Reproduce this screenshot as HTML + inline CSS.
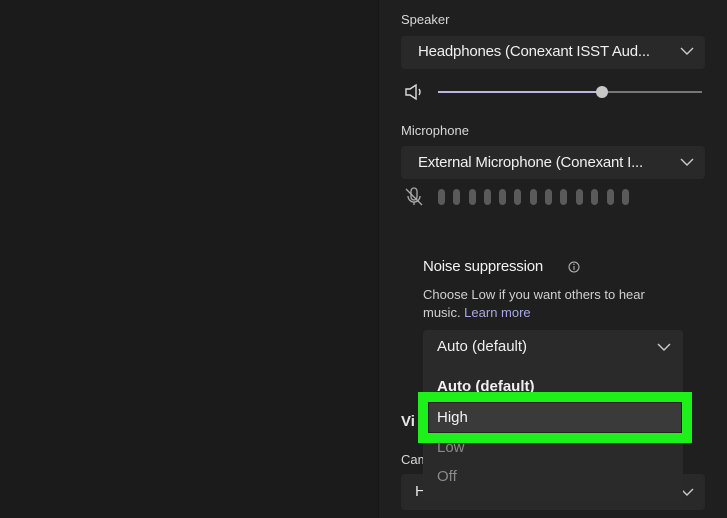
<!DOCTYPE html>
<html><head><style>
body{margin:0;width:727px;height:518px;background:#1b1b1b;position:relative;overflow:hidden;font-family:"Liberation Sans",sans-serif;color:#e6e6e6}
.a{position:absolute}
.panel{left:378px;top:0;width:349px;height:518px;background:#1f1f1f;border-left:1px solid #161616}
.dd{background:#292929;border-radius:4px}
.lbl{font-size:13px;color:#d8d8d8}
.bar{position:absolute;top:189px;width:7px;height:16px;border-radius:4px;background:#5a5a5a}
</style></head><body>
<div class="a panel"></div>
<div class="a lbl" style="left:401px;top:12px">Speaker</div>
<div class="a dd" style="left:401px;top:36px;width:304px;height:33px"></div>
<div class="a" style="left:418px;top:43px;font-size:15px;color:#f0f0f0;letter-spacing:-0.2px">Headphones (Conexant ISST Aud...</div>
<svg class="a" style="left:680px;top:46px" width="14" height="10"><path d="M1 2l6 6 6-6" stroke="#ccc" fill="none" stroke-width="1.4"/></svg>
<svg class="a" style="left:404px;top:83px" width="22" height="18"><path d="M2 6h4l6-4v14l-6-4H2z" stroke="#ddd" fill="none" stroke-width="1.4"/><path d="M15 6q2 3 0 6" stroke="#ddd" fill="none" stroke-width="1.4"/></svg>
<div class="a" style="left:438px;top:91px;width:164px;height:2px;background:#b8b8e0"></div>
<div class="a" style="left:602px;top:91px;width:100px;height:2px;background:#777"></div>
<div class="a" style="left:596px;top:86px;width:12px;height:12px;border-radius:6px;background:#c8c8c8"></div>
<div class="a lbl" style="left:401px;top:123px">Microphone</div>
<div class="a dd" style="left:401px;top:146px;width:304px;height:33px"></div>
<div class="a" style="left:418px;top:154px;font-size:15px;color:#f0f0f0;letter-spacing:-0.2px">External Microphone (Conexant I...</div>
<svg class="a" style="left:680px;top:157px" width="14" height="10"><path d="M1 2l6 6 6-6" stroke="#ccc" fill="none" stroke-width="1.4"/></svg>
<svg class="a" style="left:404px;top:187px" width="20" height="20"><path d="M7 4a3 3 0 016 0v6a3 3 0 01-6 0z M4 9a6 6 0 0012 0 M10 15v3 M2 2l16 16" stroke="#aaa" fill="none" stroke-width="1.3"/></svg>
<div class="bar" style="left:438px"></div><div class="bar" style="left:453px"></div><div class="bar" style="left:469px"></div><div class="bar" style="left:484px"></div><div class="bar" style="left:499px"></div><div class="bar" style="left:514px"></div><div class="bar" style="left:530px"></div><div class="bar" style="left:545px"></div><div class="bar" style="left:560px"></div><div class="bar" style="left:576px"></div><div class="bar" style="left:591px"></div><div class="bar" style="left:607px"></div><div class="bar" style="left:622px"></div>
<div class="a" style="left:423px;top:258px;font-size:15px;color:#f2f2f2;letter-spacing:-0.2px">Noise suppression</div>
<svg class="a" style="left:568px;top:261px" width="12" height="12"><circle cx="6" cy="6" r="5" stroke="#bbb" fill="none"/><path d="M6 5v4" stroke="#bbb"/><circle cx="6" cy="3.3" r="0.7" fill="#bbb"/></svg>
<div class="a" style="left:423px;top:286px;font-size:13px;line-height:18px;color:#d0d0d0">Choose Low if you want others to hear<br>music. <span style="color:#a8a8e8">Learn more</span></div>
<div class="a" style="left:401px;top:413px;font-size:15px;font-weight:bold">Vi</div>
<div class="a lbl" style="left:401px;top:452px">Cam</div>
<div class="a dd" style="left:401px;top:474px;width:304px;height:36px"></div>
<div class="a" style="left:415px;top:483px;font-size:15px">H</div>
<svg class="a" style="left:680px;top:487px" width="14" height="10"><path d="M1 2l6 6 6-6" stroke="#ccc" fill="none" stroke-width="1.4"/></svg>
<div class="a" style="left:423px;top:330px;width:260px;height:172px;background:#2a2a2a;border-radius:4px"></div>
<div class="a" style="left:437px;top:338px;font-size:15px;color:#f0f0f0">Auto (default)</div>
<svg class="a" style="left:657px;top:342px" width="14" height="10"><path d="M1 2l6 6 6-6" stroke="#ccc" fill="none" stroke-width="1.4"/></svg>
<div class="a" style="left:437px;top:378px;font-size:15px;font-weight:bold;color:#f0f0f0">Auto (default)</div>
<div class="a" style="left:418px;top:392px;width:254px;height:31px;border:10px solid #1ef01a;background:#3a3a3a;box-shadow:inset 0 0 0 1px #222"></div>
<div class="a" style="left:437px;top:409px;font-size:15px;color:#f5f5f5">High</div>
<div class="a" style="left:437px;top:439px;font-size:15px;color:#8a8a8a">Low</div>
<div class="a" style="left:437px;top:468px;font-size:15px;color:#8a8a8a">Off</div>
</body></html>
